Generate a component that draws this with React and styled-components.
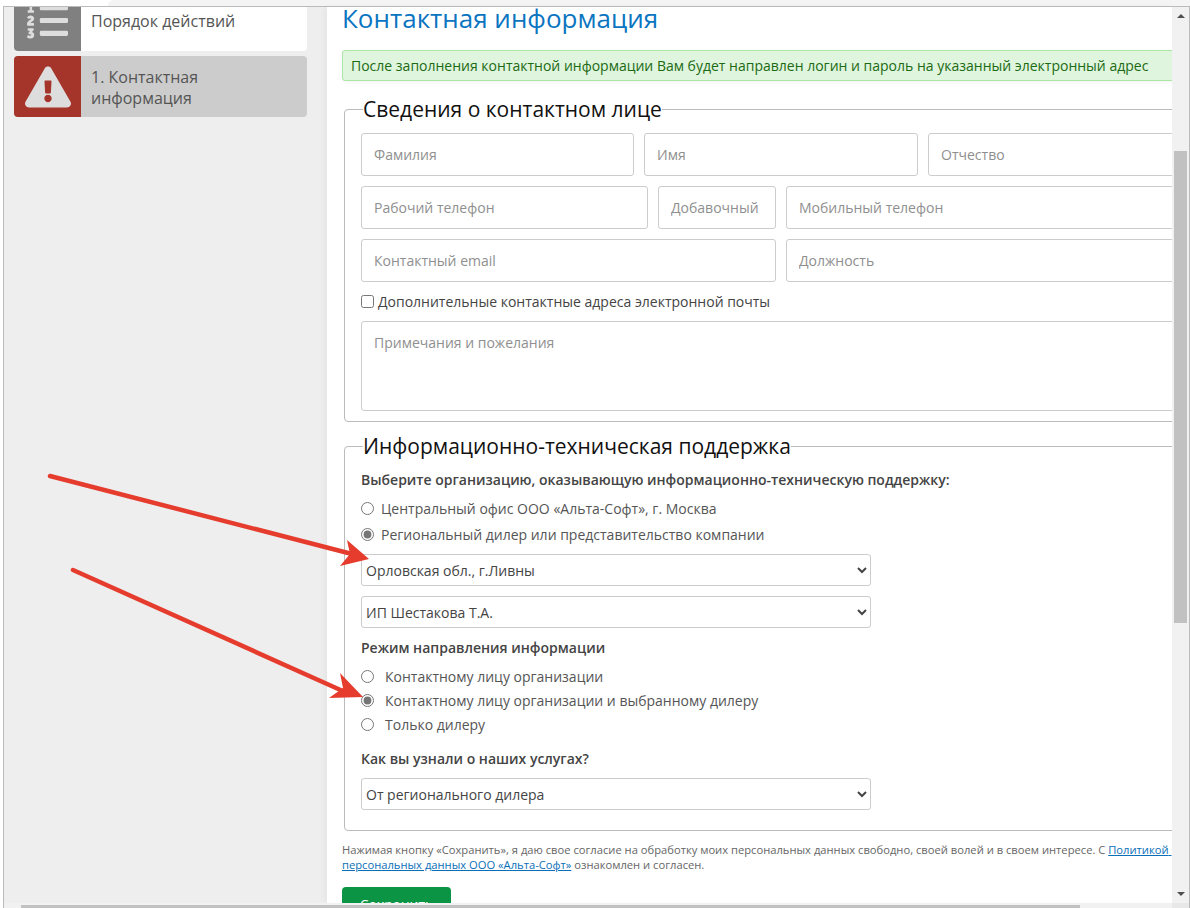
import React from "react";
import styled, { createGlobalStyle } from "styled-components";
import { FaListOl, FaExclamationTriangle } from "react-icons/fa";

const GlobalStyle = createGlobalStyle`
  html, body {
    margin: 0;
    height: 100%;
    overflow: hidden;
    background: #fff;
  }
  body {
    font-family: "Open Sans", "Liberation Sans", sans-serif;
    font-size: 14px;
    color: #555;
  }
  * { box-sizing: border-box; }
`;

const Page = styled.div`
  position: relative;
  width: 1190px;
  height: 908px;
  overflow: hidden;
  display: flex;
  flex-direction: column;
`;
const TopStrip = styled.div`
  height: 6px;
  flex-shrink: 0;
  margin-left: 108px;
  background: #f4f4f4;
  border-top-left-radius: 6px;
`;
const Frame = styled.div`
  height: 897px;
  flex-shrink: 0;
  margin-left: 3px;
  width: 1187px;
  display: flex;
  border-top: 1px solid #bbb;
  border-left: 1px solid #bbb;
  border-right: 1px solid #bbb;
`;
const Sidebar = styled.aside`
  width: 323px;
  flex-shrink: 0;
  background: #eee;
  padding-left: 10px;
  display: flex;
  flex-direction: column;
  gap: 5px;
`;
const StepCard = styled.div`
  width: 293px;
  height: ${(p) => p.$height}px;
  display: flex;
  background: ${(p) => (p.$active ? "#ccc" : "#fff")};
  border-radius: ${(p) => (p.$active ? "4px" : "0 0 4px 4px")};
  overflow: hidden;
`;
const StepIcon = styled.div`
  width: 67px;
  flex-shrink: 0;
  display: flex;
  align-items: ${(p) => (p.$active ? "center" : "flex-end")};
  justify-content: center;
  color: #ddd;
  background: ${(p) => (p.$active ? "#a5352a" : "#808080")};
  padding-bottom: ${(p) => (p.$active ? "0" : "10px")};
  svg { flex-shrink: 0; }
`;
const StepText = styled.div`
  padding: ${(p) => (p.$active ? "11px 0 0 10px" : "4px 0 0 10px")};
  font-size: 16px;
  line-height: 21px;
  color: #555;
`;
const Main = styled.main`
  width: 845px;
  flex-shrink: 0;
  overflow: hidden;
  background: #fff;
  box-shadow: -3px 0 6px rgba(0, 0, 0, 0.04);
`;
const MainInner = styled.div`
  width: 900px;
  padding-left: 15px;
`;
const Heading = styled.h1`
  margin: 0;
  font-size: 26px;
  line-height: 22px;
  font-weight: 400;
  color: #0b75c1;
`;
const Alert = styled.div`
  margin-top: 21px;
  height: 31px;
  padding-left: 8px;
  line-height: 30px;
  font-size: 14px;
  color: #1c6a14;
  background: #dff5dd;
  border: 1px solid #a9e6a3;
  border-radius: 3px;
  box-shadow: 0 2px 5px rgba(0, 0, 0, 0.04);
`;
const Group = styled.fieldset`
  margin: ${(p) => p.$top}px 0 0 2px;
  padding: 0 16px 0 16px;
  width: 876px;
  height: ${(p) => p.$height}px;
  border: 1px solid #bbb;
  border-radius: 4px;
  min-inline-size: 0;
`;
const GroupTitle = styled.legend`
  margin-left: 2px;
  padding: 0;
  font-size: 21px;
  line-height: 26px;
  color: #111;
`;
const FieldRow = styled.div`
  display: flex;
  gap: 10px;
  margin-top: ${(p) => p.$top || 0}px;
`;
const TextField = styled.input`
  width: ${(p) => p.$width}px;
  height: 43px;
  flex-shrink: 0;
  padding: 0 12px;
  font: 14px "Open Sans", sans-serif;
  border: 1px solid #ccc;
  border-radius: 3px;
  background: #fff;
  &::placeholder { color: #8f8f8f; opacity: 1; }
`;
const Notes = styled.textarea`
  display: block;
  width: 842px;
  height: 90px;
  margin-top: 10px;
  padding: 11px 12px;
  font: 14px "Open Sans", sans-serif;
  border: 1px solid #ccc;
  border-radius: 3px;
  resize: none;
  &::placeholder { color: #8f8f8f; opacity: 1; }
`;
const CheckRow = styled.label`
  display: flex;
  align-items: center;
  gap: 4px;
  height: 20px;
  margin-top: 9px;
  color: #444;
  input { margin: 0; width: 13px; height: 13px; }
`;
const BoldLabel = styled.div`
  margin-top: ${(p) => p.$top}px;
  font-weight: 600;
  line-height: 20px;
  color: #444;
`;
const RadioRow = styled.label`
  display: flex;
  align-items: center;
  gap: ${(p) => p.$gap}px;
  height: ${(p) => p.$height}px;
  color: #555;
  input {
    margin: 0;
    width: 13px;
    height: 13px;
    accent-color: #757575;
  }
`;
const RadioList = styled.div`
  margin-top: ${(p) => p.$top}px;
`;
const Select = styled.select`
  display: block;
  width: 510px;
  height: 32px;
  margin-top: ${(p) => p.$top}px;
  font: 14px "Open Sans", sans-serif;
  color: #444;
  background: #fff;
  border: 1px solid #ccc;
  border-radius: 3px;
`;
const Consent = styled.p`
  width: 830px;
  margin: 11px 0 0;
  font-size: 11.2px;
  line-height: 15px;
  color: #666;
  a { color: #0b6fb8; }
`;
const SaveButton = styled.button`
  display: block;
  width: 109px;
  height: 34px;
  margin-top: 15px;
  border: 0;
  border-radius: 4px;
  background: #0a9444;
  color: #fff;
  font: 14px "Open Sans", sans-serif;
`;
const VScroll = styled.div`
  width: 17px;
  flex-shrink: 0;
  background: #f1f1f1;
  display: flex;
  flex-direction: column;
  align-items: center;
`;
const ScrollArrow = styled.div`
  height: 17px;
  width: 100%;
  flex-shrink: 0;
  margin-bottom: ${(p) => (p.$up ? "0" : "1px")};
  display: flex;
  align-items: center;
  justify-content: center;
  &::after {
    content: "";
    border-left: 4px solid transparent;
    border-right: 4px solid transparent;
    ${(p) => (p.$up ? "border-bottom" : "border-top")}: 4px solid #505050;
  }
`;
const VThumb = styled.div`
  width: 13px;
  height: 472px;
  margin-top: 127px;
  background: #c1c1c1;
`;
const VSpacer = styled.div`
  flex: 1;
`;
const HScroll = styled.div`
  flex: 1;
  margin-left: 3px;
  width: 1187px;
  display: flex;
  background: #f1f1f1;
  border-left: 1px solid #bbb;
  border-right: 1px solid #bbb;
`;
const HThumb = styled.div`
  width: 1059px;
  margin: 2px 0 0 17px;
  background: #c1c1c1;
`;
const ScrollCorner = styled.div`
  width: 17px;
  margin-left: auto;
  background: #e8e8e8;
`;
const Arrows = styled.svg`
  position: absolute;
  left: 0;
  top: 0;
  pointer-events: none;
`;

const Radio = ({ name, checked, gap, height, children }) => (
  <RadioRow $gap={gap} $height={height}>
    <input type="radio" name={name} defaultChecked={checked} />
    {children}
  </RadioRow>
);

export default function App() {
  return (
    <Page>
      <GlobalStyle />
      <TopStrip />
      <Frame>
        <Sidebar>
          <StepCard $height={44}>
            <StepIcon>
              <FaListOl size={41} />
            </StepIcon>
            <StepText>Порядок действий</StepText>
          </StepCard>
          <StepCard $active $height={61}>
            <StepIcon $active>
              <FaExclamationTriangle size={46} />
            </StepIcon>
            <StepText $active>
              1. Контактная
              <br />
              информация
            </StepText>
          </StepCard>
        </Sidebar>
        <Main>
          <MainInner>
            <Heading>Контактная информация</Heading>
            <Alert>
              После заполнения контактной информации Вам будет направлен логин и пароль на указанный электронный адрес
            </Alert>
            <Group $top={15} $height={326}>
              <GroupTitle>Сведения о контактном лице</GroupTitle>
              <FieldRow $top={11}>
                <TextField $width={273} placeholder="Фамилия" />
                <TextField $width={274} placeholder="Имя" />
                <TextField $width={274} placeholder="Отчество" />
              </FieldRow>
              <FieldRow $top={10}>
                <TextField $width={287} placeholder="Рабочий телефон" />
                <TextField $width={118} placeholder="Добавочный" />
                <TextField $width={416} placeholder="Мобильный телефон" />
              </FieldRow>
              <FieldRow $top={10}>
                <TextField $width={415} placeholder="Контактный email" />
                <TextField $width={416} placeholder="Должность" />
              </FieldRow>
              <CheckRow>
                <input type="checkbox" />
                Дополнительные контактные адреса электронной почты
              </CheckRow>
              <Notes placeholder="Примечания и пожелания" />
            </Group>
            <Group $top={11} $height={398}>
              <GroupTitle>Информационно-техническая поддержка</GroupTitle>
              <BoldLabel $top={11}>Выберите организацию, оказывающую информационно-техническую поддержку:</BoldLabel>
              <RadioList $top={5}>
                <Radio name="org" gap={7} height={26}>Центральный офис ООО «Альта-Софт», г. Москва</Radio>
                <Radio name="org" gap={7} height={27} checked>Региональный дилер или представительство компании</Radio>
              </RadioList>
              <Select $top={6}>
                <option>Орловская обл., г.Ливны</option>
              </Select>
              <Select $top={10}>
                <option>ИП Шестакова Т.А.</option>
              </Select>
              <BoldLabel $top={10}>Режим направления информации</BoldLabel>
              <RadioList $top={6}>
                <Radio name="mode" gap={11} height={24}>Контактному лицу организации</Radio>
                <Radio name="mode" gap={11} height={24} checked>Контактному лицу организации и выбранному дилеру</Radio>
                <Radio name="mode" gap={11} height={24}>Только дилеру</Radio>
              </RadioList>
              <BoldLabel $top={13}>Как вы узнали о наших услугах?</BoldLabel>
              <Select $top={9}>
                <option>От регионального дилера</option>
              </Select>
            </Group>
            <Consent>
              Нажимая кнопку «Сохранить», я даю свое согласие на обработку моих персональных данных свободно, своей волей и в своем интересе. С{" "}
              <a href="#policy">
                Политикой{"\u00a0"}
                <wbr />
                персональных данных ООО «Альта-Софт»
              </a>{" "}
              ознакомлен и согласен.
            </Consent>
            <SaveButton>Сохранить</SaveButton>
          </MainInner>
        </Main>
        <VScroll>
          <ScrollArrow $up />
          <VThumb />
          <VSpacer />
          <ScrollArrow />
        </VScroll>
      </Frame>
      <HScroll>
        <HThumb />
        <ScrollCorner />
      </HScroll>
      <Arrows width="1190" height="908" viewBox="0 0 1190 908">
        <g fill="#e53c2e" stroke="none">
          <line x1="50" y1="476" x2="352" y2="554" stroke="#e53c2e" strokeWidth="4.5" strokeLinecap="round" />
          <polygon points="369,559 340,566 350,554 347,540" />
          <line x1="73" y1="570" x2="345" y2="692" stroke="#e53c2e" strokeWidth="4.5" strokeLinecap="round" />
          <polygon points="363,697 329,698 343,688 340,673" />
        </g>
      </Arrows>
    </Page>
  );
}
